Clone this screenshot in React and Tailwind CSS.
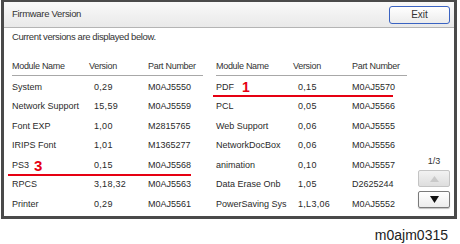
import React from 'react';

const leftRows = [
  ['System', '0,29', 'M0AJ5550'],
  ['Network Support', '15,59', 'M0AJ5559'],
  ['Font EXP', '1,00', 'M2815765'],
  ['IRIPS Font', '1,01', 'M1365277'],
  ['PS3', '0,15', 'M0AJ5568'],
  ['RPCS', '3,18,32', 'M0AJ5563'],
  ['Printer', '0,29', 'M0AJ5561'],
];

const rightRows = [
  ['PDF', '0,15', 'M0AJ5570'],
  ['PCL', '0,05', 'M0AJ5566'],
  ['Web Support', '0,06', 'M0AJ5555'],
  ['NetworkDocBox', '0,06', 'M0AJ5556'],
  ['animation', '0,10', 'M0AJ5557'],
  ['Data Erase Onb', '1,05', 'D2625244'],
  ['PowerSaving Sys', '1,L3,06', 'M0AJ5552'],
];

function Row({ name, ver, part, mark, markClass, line }) {
  return (
    <div className="relative flex items-center h-[19.5px] text-[9px] text-[#2a2a2a]">
      <div className="w-[77px] flex items-center whitespace-nowrap">
        {name}
        {mark && <span className={`font-bold text-[#e60012] leading-none ${markClass}`}>{mark}</span>}
      </div>
      <div className="w-[59px] pl-[5px] tracking-[0.3px]">{ver}</div>
      <div>{part}</div>
      {line && <span className={`absolute h-[2px] bg-[#e60012] ${line}`} />}
    </div>
  );
}

function Table({ rows, marks }) {
  return (
    <div className="w-[191px]">
      <div className="flex items-center h-[17px] border-b border-[#a8a8a8] text-[9px] text-[#333] tracking-[-0.3px]">
        <div className="w-[77px]">Module Name</div>
        <div className="w-[59px]">Version</div>
        <div>Part Number</div>
      </div>
      <div className="mt-[1.5px]">
        {rows.map((r, i) => {
          const m = marks[i] || {};
          return <Row key={r[0]} name={r[0]} ver={r[1]} part={r[2]} mark={m.mark} markClass={m.markClass} line={m.line} />;
        })}
      </div>
    </div>
  );
}

export default function App() {
  return (
    <div className="w-[460px] h-[244px] bg-white font-['Liberation_Sans',Arial,sans-serif]">
      <div className="ml-[1px] w-[456px] h-[219px] border-x-[3px] border-t-2 border-b-[3px] border-[#4a4a4a] flex flex-col bg-white">
        {/* title bar */}
        <div className="h-[26px] shrink-0 flex items-center justify-between pl-[8px] pr-[4px] border-b border-[#b4b4b4] bg-gradient-to-b from-[#f9f9f9] to-[#e9e9e9]">
          <span className="text-[9.5px] tracking-[-0.3px] text-[#333]">Firmware Version</span>
          <button className="w-[61px] h-[18px] rounded-[3px] border border-[#3a63c2] bg-gradient-to-b from-white to-[#ececec] text-[10px] text-[#333] flex items-center justify-center">
            Exit
          </button>
        </div>

        <div className="flex-1 flex flex-col pl-[8px] pt-[2px]">
          <div className="h-[14px] leading-[14px] text-[9.5px] tracking-[-0.4px] text-[#333]">
            Current versions are displayed below.
          </div>

          <div className="mt-[15px] flex-1 flex">
            <Table
              rows={leftRows}
              marks={{ 4: { mark: '3', markClass: 'text-[15px] ml-[5px]', line: 'left-[-4px] w-[183px] bottom-[-1px]' } }}
            />
            <div className="w-[13px]" />
            <Table
              rows={rightRows}
              marks={{ 0: { mark: '1', markClass: 'text-[14px] ml-[8px]', line: 'left-[-3px] w-[180px] bottom-[0px]' } }}
            />

            {/* pager */}
            <div className="w-[47px] pl-[11px] flex flex-col justify-end pb-[8px]">
              <div className="w-[32px] text-center text-[9px] text-[#333] h-[12px] leading-[12px]">1/3</div>
              <div className="mt-[3px] w-[32px] h-[17px] rounded-[2px] border border-[#c4c4c4] bg-gradient-to-b from-[#f2f2f2] to-[#dedede] flex items-center justify-center">
                <svg width="9" height="6" viewBox="0 0 9 6">
                  <polygon points="4.5,0 9,6 0,6" fill="#c9c9c9" />
                </svg>
              </div>
              <div className="mt-[4px] w-[32px] h-[17px] rounded-[2px] border border-[#7a7a7a] bg-gradient-to-b from-white to-[#ececec] shadow-[0_1px_1px_rgba(0,0,0,0.25)] flex items-center justify-center">
                <svg width="9" height="7" viewBox="0 0 9 7">
                  <polygon points="0,0 9,0 4.5,7" fill="#111" />
                </svg>
              </div>
            </div>
          </div>
        </div>
      </div>

      <div className="mt-[8px] h-[16px] leading-[16px] text-right pr-[12px] text-[14px] text-[#222]">
        m0ajm0315
      </div>
    </div>
  );
}
